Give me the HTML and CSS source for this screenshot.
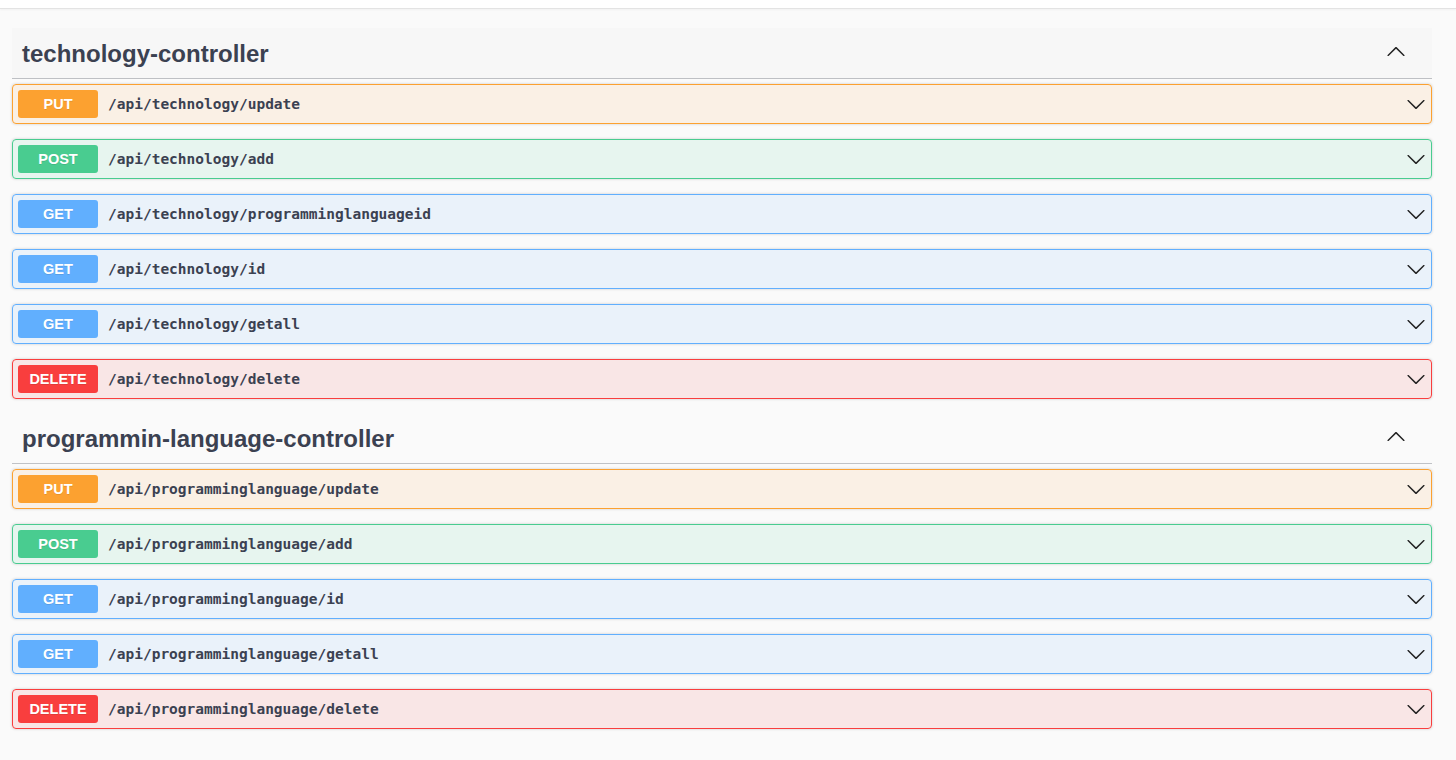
FILE: index.html
```html
<!DOCTYPE html>
<html lang="en">
<head>
<meta charset="utf-8">
<title>Swagger UI</title>
<link rel="stylesheet" href="styles.css">
</head>
<body>
<div class="topbar"></div>
<main class="content">
  <section class="tag-section">
    <div class="tag tag-hover">
      <h3 class="tag-title">technology-controller</h3>
      <svg class="tag-arrow" viewBox="0 0 20 20" width="20" height="20"><path d="M17.418 14.908c.272.268.709.268.979 0s.271-.701 0-.969l-7.908-7.83c-.27-.268-.707-.268-.979 0l-7.908 7.83c-.27.268-.27.701 0 .969.271.268.709.268.979 0L10 7.767l7.418 7.141z"/></svg>
    </div>
    <div class="opblock put"><span class="method">PUT</span><span class="path">/api/technology/update</span><svg class="op-arrow" viewBox="0 0 20 20" width="20" height="20"><path d="M17.418 6.109c.272-.268.709-.268.979 0s.271.701 0 .969l-7.908 7.83c-.27.268-.707.268-.979 0l-7.908-7.83c-.27-.268-.27-.701 0-.969.271-.268.709-.268.979 0L10 13.25l7.418-7.141z"/></svg></div>
    <div class="opblock post"><span class="method">POST</span><span class="path">/api/technology/add</span><svg class="op-arrow" viewBox="0 0 20 20" width="20" height="20"><path d="M17.418 6.109c.272-.268.709-.268.979 0s.271.701 0 .969l-7.908 7.83c-.27.268-.707.268-.979 0l-7.908-7.83c-.27-.268-.27-.701 0-.969.271-.268.709-.268.979 0L10 13.25l7.418-7.141z"/></svg></div>
    <div class="opblock get"><span class="method">GET</span><span class="path">/api/technology/programminglanguageid</span><svg class="op-arrow" viewBox="0 0 20 20" width="20" height="20"><path d="M17.418 6.109c.272-.268.709-.268.979 0s.271.701 0 .969l-7.908 7.83c-.27.268-.707.268-.979 0l-7.908-7.83c-.27-.268-.27-.701 0-.969.271-.268.709-.268.979 0L10 13.25l7.418-7.141z"/></svg></div>
    <div class="opblock get"><span class="method">GET</span><span class="path">/api/technology/id</span><svg class="op-arrow" viewBox="0 0 20 20" width="20" height="20"><path d="M17.418 6.109c.272-.268.709-.268.979 0s.271.701 0 .969l-7.908 7.83c-.27.268-.707.268-.979 0l-7.908-7.83c-.27-.268-.27-.701 0-.969.271-.268.709-.268.979 0L10 13.25l7.418-7.141z"/></svg></div>
    <div class="opblock get"><span class="method">GET</span><span class="path">/api/technology/getall</span><svg class="op-arrow" viewBox="0 0 20 20" width="20" height="20"><path d="M17.418 6.109c.272-.268.709-.268.979 0s.271.701 0 .969l-7.908 7.83c-.27.268-.707.268-.979 0l-7.908-7.83c-.27-.268-.27-.701 0-.969.271-.268.709-.268.979 0L10 13.25l7.418-7.141z"/></svg></div>
    <div class="opblock delete"><span class="method">DELETE</span><span class="path">/api/technology/delete</span><svg class="op-arrow" viewBox="0 0 20 20" width="20" height="20"><path d="M17.418 6.109c.272-.268.709-.268.979 0s.271.701 0 .969l-7.908 7.83c-.27.268-.707.268-.979 0l-7.908-7.83c-.27-.268-.27-.701 0-.969.271-.268.709-.268.979 0L10 13.25l7.418-7.141z"/></svg></div>
  </section>
  <section class="tag-section">
    <div class="tag">
      <h3 class="tag-title">programmin-language-controller</h3>
      <svg class="tag-arrow" viewBox="0 0 20 20" width="20" height="20"><path d="M17.418 14.908c.272.268.709.268.979 0s.271-.701 0-.969l-7.908-7.83c-.27-.268-.707-.268-.979 0l-7.908 7.83c-.27.268-.27.701 0 .969.271.268.709.268.979 0L10 7.767l7.418 7.141z"/></svg>
    </div>
    <div class="opblock put"><span class="method">PUT</span><span class="path">/api/programminglanguage/update</span><svg class="op-arrow" viewBox="0 0 20 20" width="20" height="20"><path d="M17.418 6.109c.272-.268.709-.268.979 0s.271.701 0 .969l-7.908 7.83c-.27.268-.707.268-.979 0l-7.908-7.83c-.27-.268-.27-.701 0-.969.271-.268.709-.268.979 0L10 13.25l7.418-7.141z"/></svg></div>
    <div class="opblock post"><span class="method">POST</span><span class="path">/api/programminglanguage/add</span><svg class="op-arrow" viewBox="0 0 20 20" width="20" height="20"><path d="M17.418 6.109c.272-.268.709-.268.979 0s.271.701 0 .969l-7.908 7.83c-.27.268-.707.268-.979 0l-7.908-7.83c-.27-.268-.27-.701 0-.969.271-.268.709-.268.979 0L10 13.25l7.418-7.141z"/></svg></div>
    <div class="opblock get"><span class="method">GET</span><span class="path">/api/programminglanguage/id</span><svg class="op-arrow" viewBox="0 0 20 20" width="20" height="20"><path d="M17.418 6.109c.272-.268.709-.268.979 0s.271.701 0 .969l-7.908 7.83c-.27.268-.707.268-.979 0l-7.908-7.83c-.27-.268-.27-.701 0-.969.271-.268.709-.268.979 0L10 13.25l7.418-7.141z"/></svg></div>
    <div class="opblock get"><span class="method">GET</span><span class="path">/api/programminglanguage/getall</span><svg class="op-arrow" viewBox="0 0 20 20" width="20" height="20"><path d="M17.418 6.109c.272-.268.709-.268.979 0s.271.701 0 .969l-7.908 7.83c-.27.268-.707.268-.979 0l-7.908-7.83c-.27-.268-.27-.701 0-.969.271-.268.709-.268.979 0L10 13.25l7.418-7.141z"/></svg></div>
    <div class="opblock delete"><span class="method">DELETE</span><span class="path">/api/programminglanguage/delete</span><svg class="op-arrow" viewBox="0 0 20 20" width="20" height="20"><path d="M17.418 6.109c.272-.268.709-.268.979 0s.271.701 0 .969l-7.908 7.83c-.27.268-.707.268-.979 0l-7.908-7.83c-.27-.268-.27-.701 0-.969.271-.268.709-.268.979 0L10 13.25l7.418-7.141z"/></svg></div>
  </section>
</main>
</body>
</html>
```
FILE: styles.css
```css
* { box-sizing: border-box; }

html, body {
  margin: 0;
  padding: 0;
  background: #fafafa;
  font-family: "Liberation Sans", Arial, sans-serif;
  color: #3b4151;
}

.topbar {
  height: 9px;
  background: #ffffff;
  border-bottom: 1px solid #e3e3e3;
  box-shadow: 0 1px 2px rgba(0, 0, 0, 0.04);
}

.content {
  padding: 19px 24px 0 12px;
}

.tag-section {
  display: flex;
  flex-direction: column;
}

.tag {
  display: flex;
  align-items: center;
  height: 51px;
  padding: 0 26px 0 10px;
  border-bottom: 1px solid rgba(59, 65, 81, 0.3);
  margin-bottom: 5px;
}

.tag-hover {
  background: rgba(0, 0, 0, 0.012);
}

.tag-title {
  flex: 1;
  margin: 0;
  font-size: 24px;
  font-weight: bold;
  color: #3b4151;
  line-height: 28px;
  margin-top: 1px;
}

.tag-arrow {
  fill: #222;
  margin-top: -4px;
}

.opblock {
  display: flex;
  align-items: center;
  height: 40px;
  padding: 0 5px;
  margin-bottom: 15px;
  border: 1px solid;
  border-radius: 4px;
  box-shadow: 0 0 3px rgba(0, 0, 0, 0.19);
}

.tag-section:first-child .opblock:last-child {
  margin-bottom: 14px;
}

.method {
  width: 80px;
  height: 28px;
  line-height: 28px;
  border-radius: 3px;
  text-align: center;
  color: #fff;
  font-size: 14.5px;
  font-weight: bold;
  text-shadow: 0 1px 0 rgba(0, 0, 0, 0.1);
  flex: none;
}

.path {
  flex: 1;
  margin-left: 10px;
  font-family: "DejaVu Sans Mono", "Liberation Mono", monospace;
  font-weight: bold;
  font-size: 14.5px;
  color: #3b4151;
}

.op-arrow {
  fill: #222;
  flex: none;
}

.put { background: rgba(252, 161, 48, 0.1); border-color: #fca130; }
.put .method { background: #fca130; }
.post { background: rgba(73, 204, 144, 0.1); border-color: #49cc90; }
.post .method { background: #49cc90; }
.get { background: rgba(97, 175, 254, 0.1); border-color: #61affe; }
.get .method { background: #61affe; }
.delete { background: rgba(249, 62, 62, 0.1); border-color: #f93e3e; }
.delete .method { background: #f93e3e; }
```
